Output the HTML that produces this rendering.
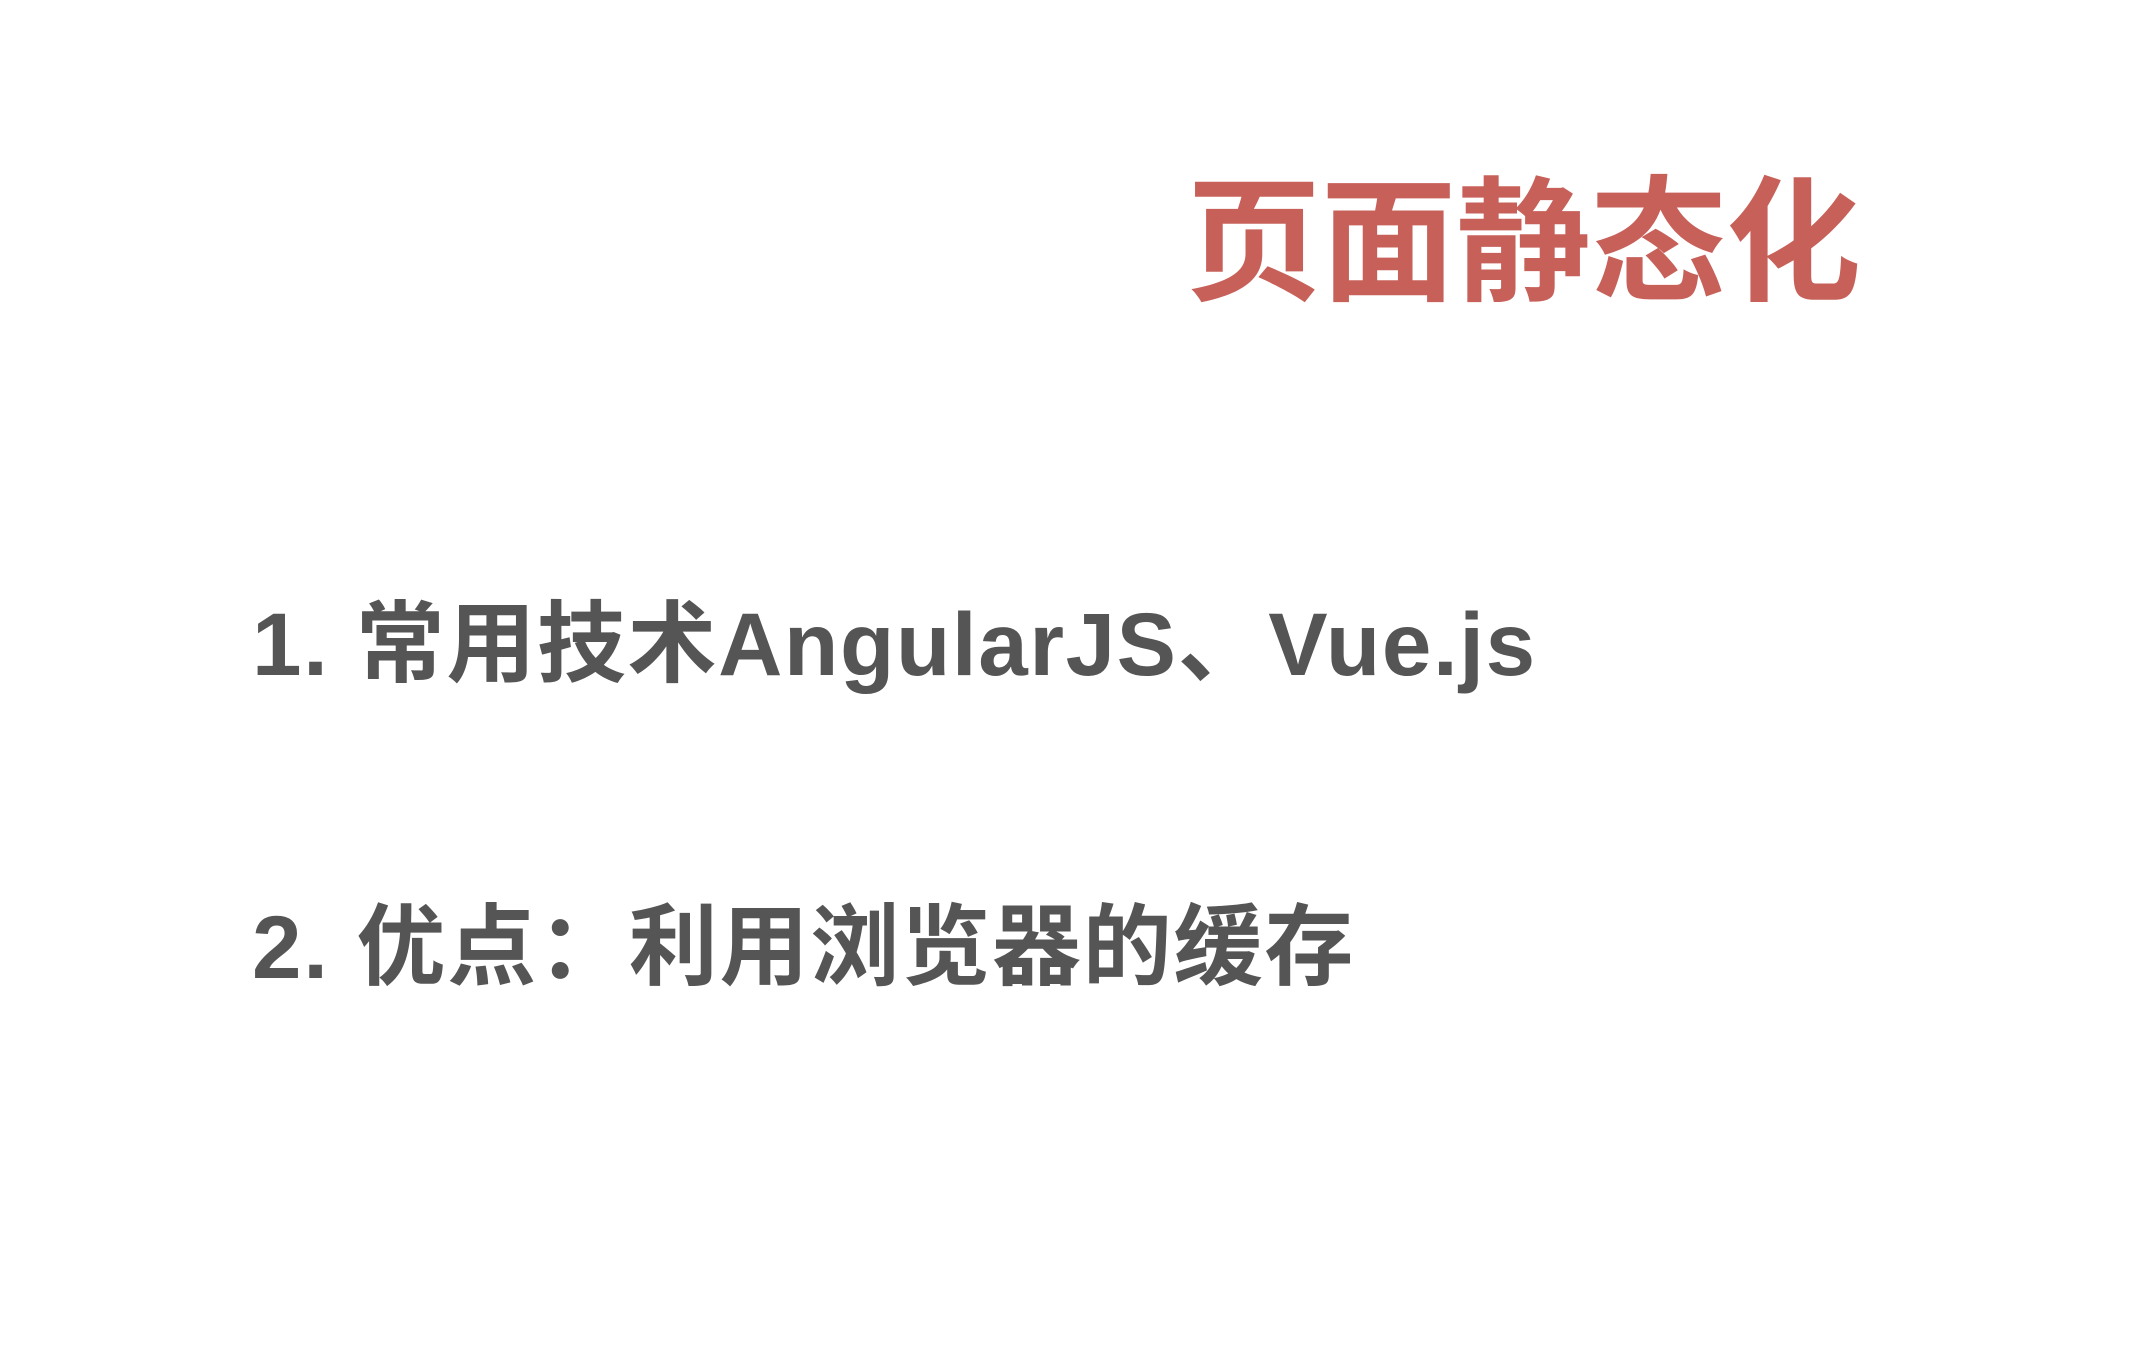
<!DOCTYPE html>
<html><head><meta charset="utf-8"><style>
html,body{margin:0;padding:0;width:2136px;height:1352px;background:#fff;overflow:hidden}
div{position:absolute;white-space:nowrap;font-family:"Liberation Sans","Noto Sans CJK SC",sans-serif;font-weight:bold;line-height:1}
.t{left:1186px;top:164px;font-size:135px;color:#c8605a;font-family:"Noto Sans CJK SC",sans-serif}
.l{left:252px;font-size:89px;color:#555}
</style></head><body>
<div class="t">页面静态化</div>
<div class="l" style="top:600px;letter-spacing:1.6px">1. 常用技术AngularJS、Vue.js</div>
<div class="l" style="top:903px;letter-spacing:1.8px">2. 优点：利用浏览器的缓存</div>
</body></html>
